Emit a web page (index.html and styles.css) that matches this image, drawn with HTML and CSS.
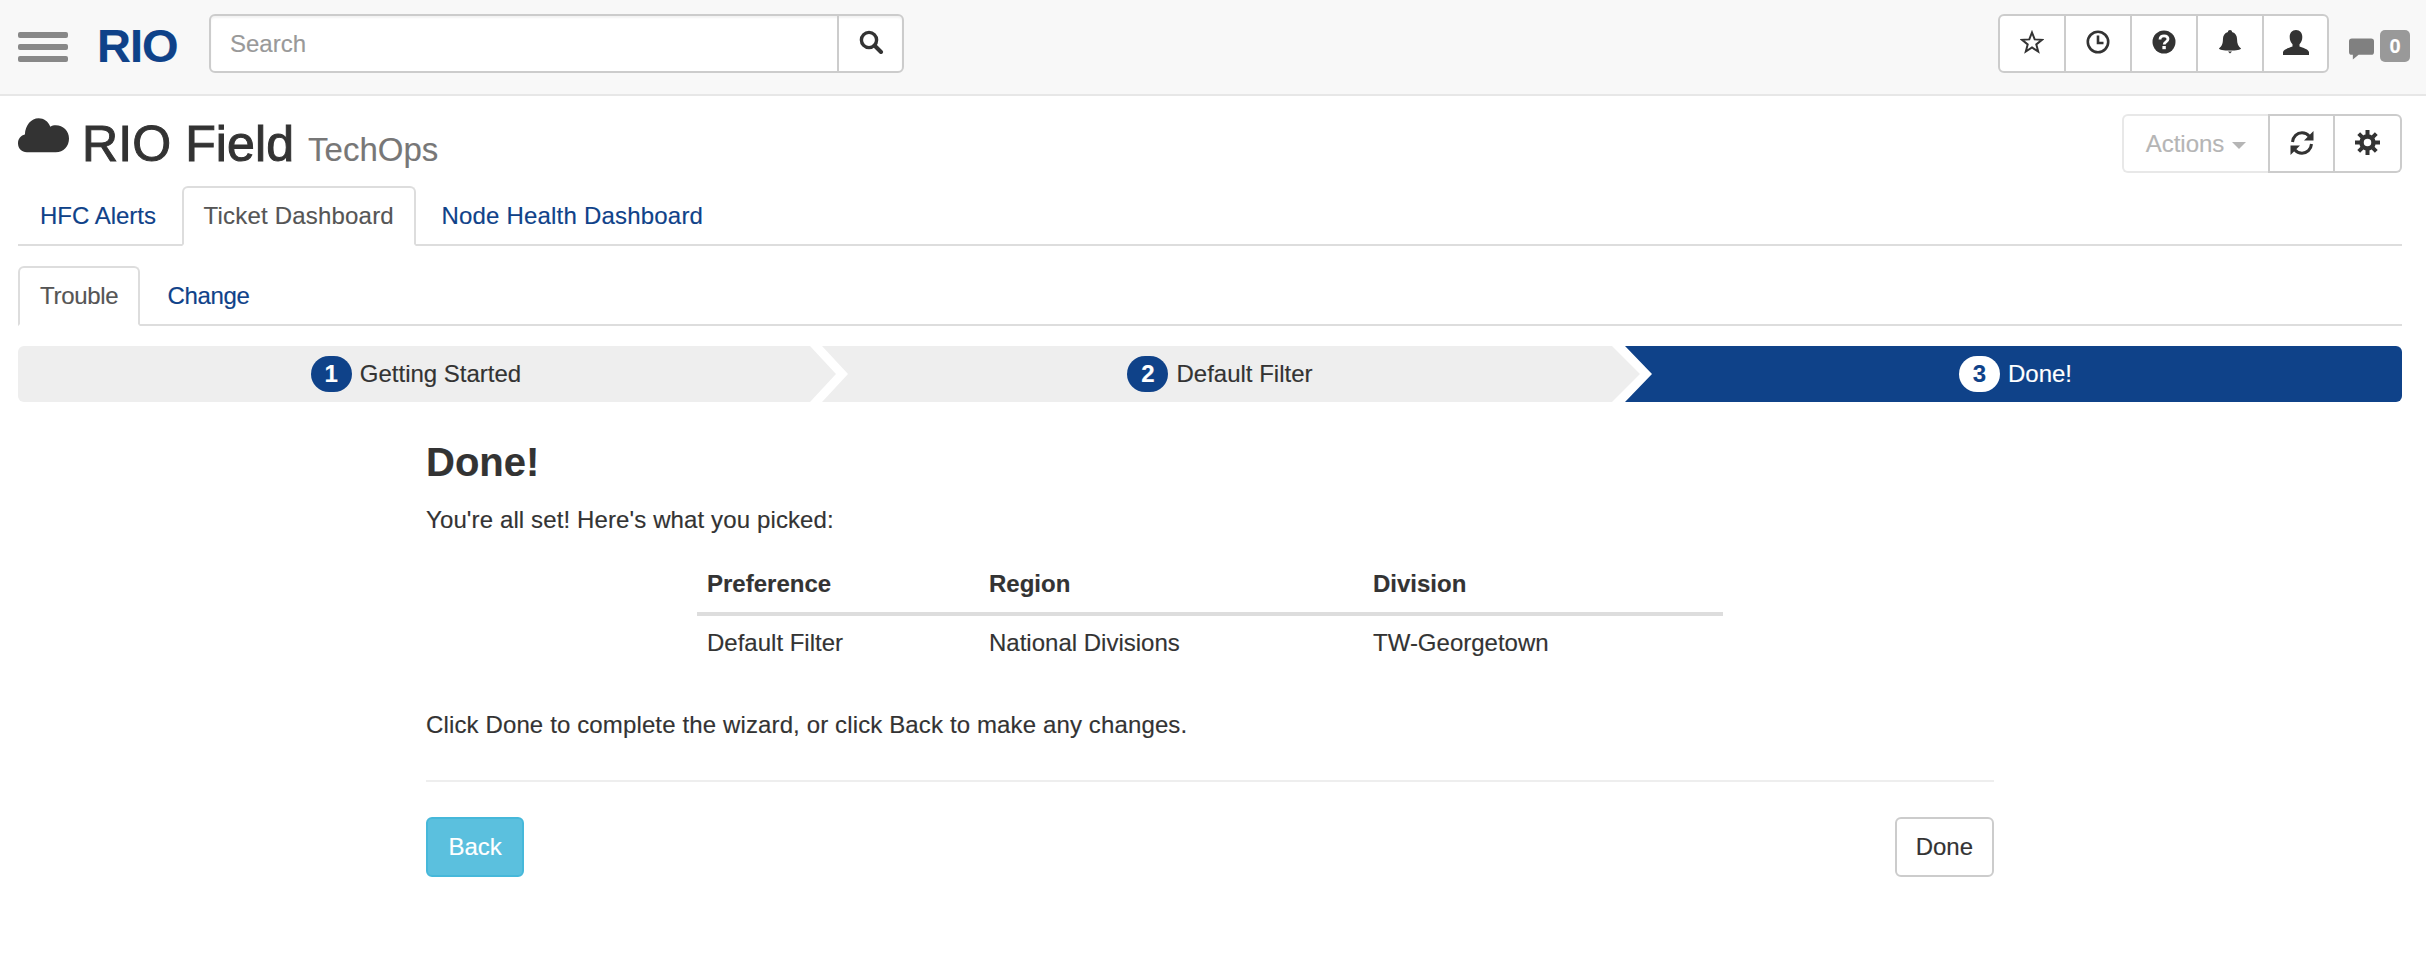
FILE: index.html
```html
<!DOCTYPE html>
<html lang="en">
<head>
<meta charset="utf-8">
<title>RIO Field</title>
<link rel="stylesheet" href="styles.css">
</head>
<body>
<header class="navbar">
  <div class="burger"><span></span><span></span><span></span></div>
  <div class="logo">RIO</div>
  <div class="search">
    <div class="search-input">Search</div>
    <div class="search-btn">
      <svg width="26" height="24" viewBox="0 0 26 24"><circle cx="11" cy="10" r="7.6" fill="none" stroke="#333" stroke-width="3.4"/><path d="M16.5 15.5 L23 22" stroke="#333" stroke-width="4" stroke-linecap="round"/></svg>
    </div>
  </div>
  <div class="nav-right">
    <div class="btn-group">
      <div class="ib"><svg width="24" height="24" viewBox="0 0 24 24"><path d="M12 2.5l2.7 6.9 7.3.4-5.7 4.6 1.9 7.1L12 17.5l-6.2 4 1.9-7.1L2 9.8l7.3-.4z" fill="none" stroke="#333" stroke-width="2" stroke-linejoin="miter"/></svg></div>
      <div class="ib"><svg width="24" height="24" viewBox="0 0 24 24"><circle cx="12" cy="12" r="10.2" fill="none" stroke="#333" stroke-width="2.6"/><path d="M12 5.5V13h5.5" fill="none" stroke="#333" stroke-width="2.6"/></svg></div>
      <div class="ib"><svg width="24" height="24" viewBox="0 0 24 24"><circle cx="12" cy="12" r="11.5" fill="#333"/><path d="M8 9.4c0-2.4 1.8-3.6 4-3.6s4 1.2 4 3.300c0 2.700-3.800 2.700-3.800 5.300" fill="none" stroke="#fff" stroke-width="2.800"/><rect x="10.400" y="16" width="3.400" height="3.200" fill="#fff"/></svg></div>
      <div class="ib"><svg width="22" height="24" viewBox="0 0 24 26"><path d="M12 0c1.300 0 2.200.9 2.200 2 3.800 1 5.500 4 5.500 8 0 5 1.300 7.500 4.300 10 0 1.300-5 2.300-12 2.300S0 21.300 0 20c3-2.500 4.300-5 4.300-10 0-4 1.700-7 5.500-8C9.800.9 10.700 0 12 0z" fill="#333"/><path d="M9.800 23.300h4.400L12 25.500z" fill="#333"/></svg></div>
      <div class="ib"><svg width="26" height="25" viewBox="0 0 26 25"><path d="M13 0c4 0 6.300 3 6.300 7 0 3-1 5.500-2.800 7.300v2.200c3.500 1.500 8.500 2.500 9.500 5.500v3H0v-3c1-3 6-4 9.500-5.500v-2.200C7.700 12.500 6.700 10 6.700 7c0-4 2.300-7 6.300-7z" fill="#333"/></svg></div>
    </div>
    <div class="chat">
      <svg width="25" height="22" viewBox="0 0 26 22"><path d="M3 0h20a3 3 0 0 1 3 3v11a3 3 0 0 1-3 3H10l-6 5v-5H3a3 3 0 0 1-3-3V3a3 3 0 0 1 3-3z" fill="#808080"/></svg>
      <span class="badge-count">0</span>
    </div>
  </div>
</header>

<main class="page">
  <div class="title-row">
    <h1 class="title">
      <svg class="cloud" width="51" height="35" viewBox="0 0 52 35"><path d="M9 34.500C4 34.500 0 31 0 25.500 0 20.500 3 17.500 7 16.500 7.500 7 13.500 0 21 0c5.500 0 9.500 3 12 8.500 1.500-1 3.500-1.500 5.500-1.500C46 7 52 13 52 20.500c0 8-5.500 14-13.500 14z" fill="#333"/></svg>
      <span>RIO Field</span>
      <small>TechOps</small>
    </h1>
    <div class="actions">
      <div class="act act-disabled">Actions<i class="caret"></i></div>
      <div class="act act-icon"><svg width="26" height="26" viewBox="0 0 26 26"><path d="M3.500 12C4 6.500 8 2.800 13 2.800c3 0 5.500 1.200 7.300 3.400" fill="none" stroke="#333" stroke-width="3"/><path d="M24.500 1v9.500H15z" fill="#333"/><path d="M22.500 14c-.5 5.500-4.500 9.200-9.500 9.200-3 0-5.500-1.200-7.300-3.400" fill="none" stroke="#333" stroke-width="3"/><path d="M1.500 25v-9.500H11z" fill="#333"/></svg></div>
      <div class="act act-icon"><svg width="25" height="25" viewBox="0 0 25 25"><circle cx="12.500" cy="12.500" r="6" fill="none" stroke="#333" stroke-width="4.500"/><g stroke="#333" stroke-width="4"><path d="M12.500 0v5M12.500 20v5M0 12.500h5M20 12.500h5M3.700 3.700l3.500 3.500M17.800 17.800l3.500 3.500M3.700 21.300l3.500-3.500M17.800 7.200l3.500-3.500"/></g></svg></div>
    </div>
  </div>

  <nav class="tabs">
    <a class="tab">HFC Alerts</a>
    <a class="tab active wide">Ticket Dashboard</a>
    <a class="tab wide">Node Health Dashboard</a>
  </nav>
  <nav class="tabs sub">
    <a class="tab active">Trouble</a>
    <a class="tab">Change</a>
  </nav>

  <div class="wizard">
    <div class="step step-first"><span class="num">1</span>Getting Started</div>
    <div class="step step-mid"><span class="num">2</span>Default Filter</div>
    <div class="step step-last"><span class="num">3</span>Done!</div>
  </div>

  <section class="content">
    <h3 class="heading">Done!</h3>
    <p class="intro">You're all set! Here's what you picked:</p>
    <table class="summary">
      <thead>
        <tr><th class="c1">Preference</th><th class="c2">Region</th><th class="c3">Division</th></tr>
      </thead>
      <tbody>
        <tr><td>Default Filter</td><td>National Divisions</td><td>TW-Georgetown</td></tr>
      </tbody>
    </table>
    <p class="outro">Click Done to complete the wizard, or click Back to make any changes.</p>
    <hr class="rule">
    <div class="buttons">
      <button class="btn btn-info">Back</button>
      <button class="btn btn-default">Done</button>
    </div>
  </section>
</main>
</body>
</html>
```
FILE: styles.css
```css
* { box-sizing: border-box; }
html, body { margin: 0; padding: 0; background: #fff; }
body {
  font-family: "Liberation Sans", Arial, sans-serif;
  font-size: 24px;
  line-height: 34px;
  color: #333;
  -webkit-text-stroke: .15px;
}
.navbar {
  height: 96px;
  background: #f8f8f8;
  border-bottom: 2px solid #e7e7e7;
  display: flex;
  align-items: center;
  padding: 0 16px 7px 18px;
}
.burger { width: 50px; display: flex; flex-direction: column; gap: 6px; margin-top: 7px; }
.burger span { display: block; height: 6px; border-radius: 2px; background: #888; }
.logo {
  margin-left: 29px;
  width: 81px;
  font-size: 47px;
  line-height: 48px;
  font-weight: 700;
  letter-spacing: -1px;
  color: #0f4289;
  margin-top: 4px;
}
.search {
  margin-left: 31px;
  width: 695px;
  height: 59px;
  display: flex;
  border: 2px solid #ccc;
  border-radius: 6px;
  background: #fff;
  box-shadow: inset 0 2px 2px rgba(0,0,0,.05);
}
.search-input { flex: 1; padding: 11px 19px; color: #999; }
.search-btn {
  width: 65px;
  border-left: 2px solid #ccc;
  display: flex;
  align-items: center;
  justify-content: center;
  padding-bottom: 3px;
}
.nav-right { margin-left: auto; display: flex; align-items: center; }
.btn-group {
  width: 331px;
  height: 59px;
  display: flex;
  border: 2px solid #ccc;
  border-radius: 6px;
  background: #fff;
}
.ib {
  width: 66px;
  border-right: 2px solid #ccc;
  display: flex;
  align-items: center;
  justify-content: center;
  padding-bottom: 3px;
}
.ib:last-child { flex: 1; border-right: 0; }
.chat { margin: 5px 0 0 20px; display: flex; align-items: flex-start; gap: 6px; width: 61px; }
.chat svg { margin-top: 8px; flex: none; }
.badge-count {
  width: 30px;
  height: 32px;
  border-radius: 5px;
  background: #999;
  color: #fff;
  font-size: 20px;
  font-weight: 700;
  line-height: 32px;
  text-align: center;
}
.page { padding: 18px 24px 0 18px; }
.title-row { height: 72px; display: flex; justify-content: space-between; align-items: flex-start; }
.title {
  margin: 0;
  padding-top: 2px;
  display: flex;
  align-items: baseline;
  font-size: 50px;
  line-height: 56px;
  font-weight: 400;
  letter-spacing: .1px;
  color: #333;
  -webkit-text-stroke: 1px;
}
.cloud { align-self: flex-start; margin-top: 2px; margin-right: 13px; }
.title small { font-size: 33px; color: #777; margin-left: 14px; font-weight: 400; line-height: 1; letter-spacing: 0; -webkit-text-stroke: .15px; }
.actions { display: flex; height: 59px; }
.act {
  display: flex;
  align-items: center;
  justify-content: center;
  border: 2px solid #ccc;
  background: #fff;
}
.act-disabled {
  width: 146px;
  border-color: #e8e8e8;
  border-right: 0;
  border-radius: 6px 0 0 6px;
  color: #b5b5b5;
}
.caret {
  display: inline-block;
  width: 0;
  height: 0;
  margin-left: 8px;
  margin-top: 4px;
  border-left: 7px solid transparent;
  border-right: 7px solid transparent;
  border-top: 7px solid #b5b5b5;
}
.act-icon { width: 67px; padding-bottom: 2px; }
.act-icon + .act-icon { border-left: 0; border-radius: 0 6px 6px 0; }
.tabs {
  display: flex;
  height: 60px;
  border-bottom: 2px solid #ddd;
  gap: 3.500px;
}
.sub { margin-top: 20px; gap: 5px; }
.tab {
  height: 60px;
  padding: 11px 20px;
  border: 2px solid transparent;
  border-radius: 6px 6px 0 0;
  color: #0f4289;
  white-space: nowrap;
}
.tab.wide { letter-spacing: .2px; }
.sub .tab { letter-spacing: -.3px; }
.tab.active {
  color: #555;
  background: #fff;
  border-color: #ddd #ddd #fff;
}
.wizard { display: flex; margin-top: 20px; height: 56px; }
.step {
  height: 56px;
  display: flex;
  align-items: center;
  justify-content: center;
  background: #eee;
  color: #333;
}
.step + .step { margin-left: -14px; }
.num {
  width: 41px;
  height: 36px;
  margin-right: 8px;
  border-radius: 18px;
  background: #0f4289;
  color: #fff;
  font-size: 24px;
  font-weight: 700;
  line-height: 36px;
  text-align: center;
}
.step-first {
  width: 818px;
  border-radius: 6px 0 0 6px;
  padding-right: 22px;
  clip-path: polygon(0 0, 792px 0, 100% 50%, 792px 100%, 0 100%);
}
.step-mid {
  width: 818px;
  padding-right: 22px;
  clip-path: polygon(0 0, 790px 0, 100% 50%, 790px 100%, 0 100%, 26px 50%);
}
.step + .step-last {
  flex: 1;
  margin-left: -15px;
  padding-left: 4px;
  background: #0f4289;
  color: #fff;
  border-radius: 0 6px 6px 0;
  clip-path: polygon(0 0, 100% 0, 100% 100%, 0 100%, 27px 50%);
}
.step-last .num { background: #fff; color: #0f4289; }
.content { margin: 0 408px; }
.heading {
  margin: 38px 0 0;
  font-size: 40px;
  line-height: 45px;
  font-weight: 700;
  color: #333;
}
.intro { margin: 18px 0 0; letter-spacing: .12px; }
.summary {
  margin: 18px auto 0;
  width: 1026px;
  border-collapse: collapse;
  table-layout: fixed;
}
.summary th {
  text-align: left;
  padding: 12px 10px 11px;
  border-bottom: 4px solid #ddd;
}
.summary td { padding: 10px; }
.c1 { width: 282px; }
.c2 { width: 384px; }
.c3 { width: 360px; }
.outro { margin: 38px 0 0; letter-spacing: .13px; }
.rule { margin: 38px 0 0; border: 0; border-top: 2px solid #eee; }
.buttons { margin-top: 35px; display: flex; justify-content: space-between; }
.btn {
  height: 60px;
  padding: 0 20px;
  font: inherit;
  border: 2px solid #ccc;
  border-radius: 6px;
  background: #fff;
  color: #333;
}
.btn-default { padding: 0 19px; }
.btn-info { padding: 0 20.500px; background: #5bc0de; border-color: #46b8da; color: #fff; }
```
